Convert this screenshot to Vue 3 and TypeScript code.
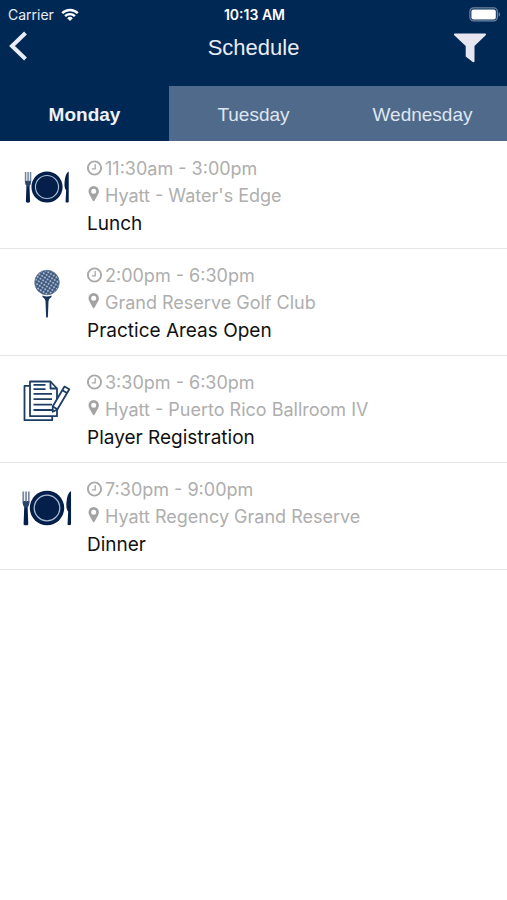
<script setup lang="ts">
import { ref } from 'vue'

type IconName = 'meal' | 'golf' | 'papers'

interface ScheduleItem {
  time: string
  place: string
  title: string
  icon: IconName
  large?: boolean
}

const days: string[] = ['Monday', 'Tuesday', 'Wednesday']
const activeDay = ref<string>('Monday')

const items: ScheduleItem[] = [
  { time: '11:30am - 3:00pm', place: "Hyatt - Water's Edge", title: 'Lunch', icon: 'meal' },
  { time: '2:00pm - 6:30pm', place: 'Grand Reserve Golf Club', title: 'Practice Areas Open', icon: 'golf' },
  { time: '3:30pm - 6:30pm', place: 'Hyatt - Puerto Rico Ballroom IV', title: 'Player Registration', icon: 'papers' },
  { time: '7:30pm - 9:00pm', place: 'Hyatt Regency Grand Reserve', title: 'Dinner', icon: 'meal', large: true },
]
</script>

<template>
  <div class="screen">
    <header class="top">
      <div class="status">
        <div class="carrier">
          <span>Carrier</span>
          <svg class="wifi" viewBox="0 0 18 13" aria-hidden="true">
            <g fill="none" stroke="#fff" stroke-width="2.4">
              <path d="M1.2 5.2a11 11 0 0 1 15.6 0" />
              <path d="M4.1 8.2a6.900 6.900 0 0 1 9.800 0" />
            </g>
            <path d="M9 13L6.2 10.2a4 4 0 0 1 5.6 0z" fill="#fff" />
          </svg>
        </div>
        <span class="clock">10:13 AM</span>
        <svg class="battery" viewBox="0 0 32 15" aria-hidden="true">
          <rect x="0.9" y="0.9" width="27.4" height="13" rx="3.6" fill="none" stroke="#6f86a3" stroke-width="1.2" />
          <rect x="2.4" y="2.6" width="24.4" height="9.8" rx="2" fill="#fff" />
          <path d="M29.6 5.2c1.8.6 1.8 3.8 0 4.4z" fill="#6f86a3" />
        </svg>
      </div>
      <div class="nav">
        <button class="nav-button" type="button" aria-label="Back">
          <svg class="back" viewBox="0 0 20 30" aria-hidden="true">
            <path d="M16.5 2L3 15l13.500 13" fill="none" stroke="#e9edf5" stroke-width="4" />
          </svg>
        </button>
        <h1 class="heading">Schedule</h1>
        <button class="nav-button end" type="button" aria-label="Filter">
          <svg class="funnel" viewBox="0 0 34 30" aria-hidden="true">
            <path d="M1.500.5h31q1 .8.200 1.800L21.500 13v15.500q-.6 1.200-1.800.6L12.700 23.500V13L1.200 2.300Q.5 1.300 1.500.5z" fill="#e7e5ef" />
          </svg>
        </button>
      </div>
      <nav class="tabs" aria-label="Days">
        <button
          v-for="day in days"
          :key="day"
          type="button"
          class="tab"
          :class="{ active: day === activeDay }"
          :aria-pressed="day === activeDay"
          @click="activeDay = day"
        >{{ day }}</button>
      </nav>
    </header>

    <ul class="list">
      <li v-for="item in items" :key="item.time" class="item">
        <svg
          v-if="item.icon === 'meal'"
          class="picture"
          :viewBox="item.large ? '1.500 1.500 47 47' : '-1 -1 52 52'"
          aria-hidden="true"
        >
          <g fill="#041f49">
            <circle cx="25" cy="25" r="16.200" />
            <path d="M3.600 24h3.200l.6 16.500q-2.200 1.600-4.400 0z" />
            <path d="M47.600 9V40.500q-2 1.400-3.300 0l.6-12q-2.200-2.500-1.600-9 .7-8.500 4.300-10.500z" />
          </g>
          <path d="M2 18.500h6.600q0 4.500-2.100 6.200H4.100Q2 23 2 18.500z" fill="#2b4369" />
          <path d="M2.700 9.500V19M5.300 9.500V19M7.900 9.500V19" fill="none" stroke="#7587a3" stroke-width="1.600" />
          <circle cx="25" cy="25" r="12" fill="none" stroke="#a9bdd6" stroke-width="1.200" />
        </svg>

        <svg v-else-if="item.icon === 'golf'" class="picture" viewBox="0 0 50 50" aria-hidden="true">
          <defs>
            <pattern id="dimples" width="3.200" height="3.200" patternUnits="userSpaceOnUse" patternTransform="rotate(32)">
              <rect width="3.200" height="3.200" fill="#3a547c" />
              <circle cx="1.600" cy="1.600" r="1.100" fill="#a9b8ca" />
            </pattern>
          </defs>
          <circle cx="25" cy="13.500" r="12.300" fill="url(#dimples)" stroke="#5d7191" stroke-width="0.800" />
          <path d="M20.500 26.500q4.500 1.800 9 0v1.400q-2.600 1.600-3 4L25.900 48q-.9 1.600-1.800 0l-.6-16q-.4-2.500-3-4.100z" fill="#19345f" />
        </svg>

        <svg v-else class="picture" viewBox="0 -2 50 50" aria-hidden="true">
          <g fill="none" stroke="#1d3d65" stroke-width="1.800" stroke-linejoin="round">
            <path d="M8 7.800H2.500v34.400h27.700V38.200" />
            <path d="M8 3.500h20.500l6.500 7v27.700H8z" />
            <path d="M28.500 3.500v7H35" />
            <path d="M11.500 6.800h12M11.500 11.200h12M11.500 15.800h18.500M11.500 21.200h18.500M11.500 26.600h18.500M11.500 32h18.500" />
            <path d="M42.500 8.500l4.800 2.800-12 20.200-4.600 2.300.1-5.500z" fill="#fff" />
            <path d="M40.300 12.200l4.800 2.900M31 28.500l4.200 2.700" />
          </g>
        </svg>

        <div class="details">
          <div class="meta">
            <svg class="glyph" viewBox="0 0 18 18" aria-hidden="true">
              <circle cx="7.500" cy="8" r="6.600" fill="none" stroke="#a9a9a9" stroke-width="1.900" />
              <path d="M8.200 4v4.800H4.800" fill="none" stroke="#a9a9a9" stroke-width="1.300" />
            </svg>
            <span>{{ item.time }}</span>
          </div>
          <div class="meta">
            <svg class="glyph" viewBox="0 1 18 18" overflow="visible" aria-hidden="true">
              <path fill-rule="evenodd" d="M6.700 0a5.200 5.200 0 0 1 5.200 5.200c0 1.200-.3 2-.8 3L7.500 14.800q-.8 1-1.600 0L2.300 8.200c-.5-1-.8-1.800-.8-3A5.200 5.200 0 0 1 6.700 0zm0 2.700a2.500 2.500 0 1 0 0 5 2.500 2.500 0 0 0 0-5z" fill="#a3a3a3" />
            </svg>
            <span>{{ item.place }}</span>
          </div>
          <div class="title">{{ item.title }}</div>
        </div>
      </li>
    </ul>
  </div>
</template>

<style>
body {
  background: #fff;
}
</style>

<style scoped>
.screen {
  font-family: Inter, "Liberation Sans", sans-serif;
  color: #111;
}

.top {
  background: #002855;
  color: #e9edf5;
}

.status {
  display: grid;
  grid-template-columns: 1fr auto 1fr;
  align-items: center;
  height: 28px;
  padding: 0 6px 0 8px;
  font-size: 14px;
}

.carrier {
  display: flex;
  align-items: center;
  gap: 7px;
}

.wifi {
  width: 18px;
  height: 13px;
}

.clock {
  color: #fff;
  font-weight: 600;
}

.battery {
  width: 32px;
  height: 15px;
  justify-self: end;
}

.nav {
  box-sizing: border-box;
  display: grid;
  grid-template-columns: 1fr auto 1fr;
  align-items: start;
  height: 58px;
  padding: 3px 9px 0;
}

.nav-button {
  justify-self: start;
  padding: 0;
  border: 0;
  background: none;
  line-height: 0;
  cursor: pointer;
}

.nav-button.end {
  justify-self: end;
  padding: 2px 11px 0 0;
}

.back {
  width: 20px;
  height: 30px;
}

.funnel {
  width: 34px;
  height: 30px;
}

.heading {
  margin: 0;
  font: 400 22px/34px "Liberation Sans", Arial, sans-serif;
}

.tabs {
  display: grid;
  grid-template-columns: repeat(3, 1fr);
}

.tab {
  height: 55px;
  padding: 2px 0 0;
  border: 0;
  background: #4f6a8a;
  color: #dfe6f2;
  font: 400 19px "Liberation Sans", Arial, sans-serif;
  cursor: pointer;
}

.tab.active {
  background: #002855;
  color: #eef1f8;
  font-weight: 700;
}

.list {
  margin: 0;
  padding: 1px 0 0;
  list-style: none;
}

.item {
  display: flex;
  align-items: flex-start;
  gap: 15px;
  padding: 13px 22px 10px;
  border-bottom: 1px solid #e6e6e6;
}

.picture {
  flex: none;
  width: 50px;
  height: 50px;
  margin-top: 7px;
}

.details {
  flex: 1;
  min-width: 0;
}

.meta {
  display: flex;
  align-items: center;
  color: #aeaeae;
  font-size: 18px;
  line-height: 27px;
}

.glyph {
  flex: none;
  width: 18px;
  height: 18px;
}

.title {
  font-size: 19px;
  line-height: 29px;
}
</style>
